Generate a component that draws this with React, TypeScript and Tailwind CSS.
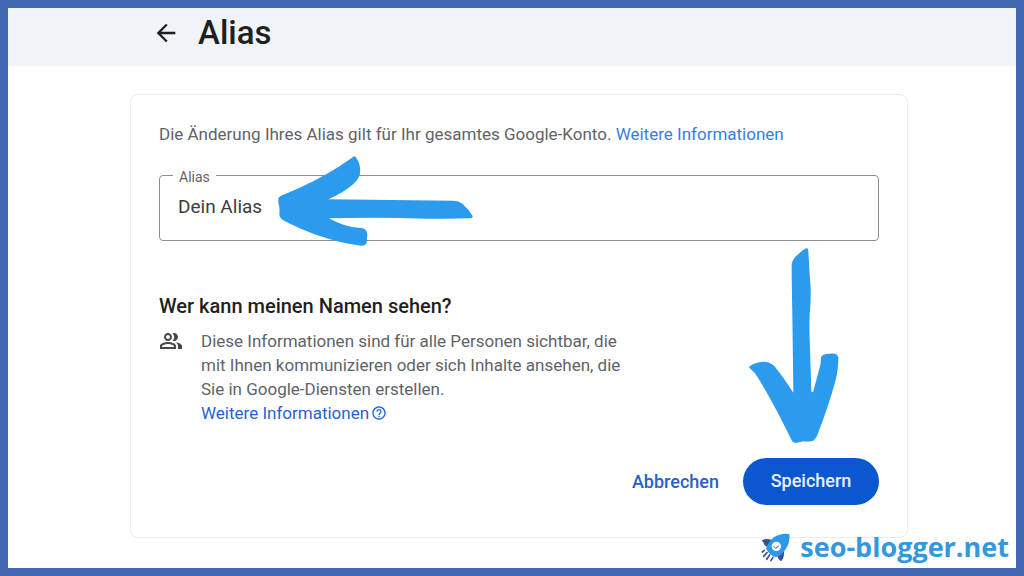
import { useState } from 'react'
import { MdArrowBack, MdHelpOutline, MdOutlinePeopleAlt } from 'react-icons/md'

function ArrowLeftMarker() {
  return (
    <svg
      aria-hidden="true"
      className="pointer-events-none absolute -top-[19px] left-[119px] h-[90px] w-[195px] text-[#2b9bed]"
      fill="currentColor"
      viewBox="0 0 585 270"
    >
      <path d="M1 126Q4 122 20 115Q110 78 186 30L226 2Q231 -2 235 6Q249 26 246 52Q244 68 226 84Q200 108 151 130L525 134Q543 134 554 144Q572 160 584 180Q585 187 578 187Q520 189 446 188Q300 183 153 187Q200 214 246 216Q266 214 268 236L266 262Q262 270 250 269Q196 264 116 237Q60 217 16 193Q4 186 4 174Q6 156 1 140Z" />
    </svg>
  )
}

function ArrowDownMarker() {
  return (
    <svg
      aria-hidden="true"
      className="pointer-events-none absolute bottom-[61px] left-[6px] h-[196px] w-[90px] text-[#2b9bed]"
      fill="currentColor"
      viewBox="0 0 270 588"
    >
      <path d="M171 1Q178 -1 178 8Q181 70 185 120Q186 160 182 200Q180 240 183 300L187 430Q189 436 193 430L215 347L216 330Q218 320 232 318Q248 315 258 317Q269 320 268 334Q267 370 260 396Q240 470 207 556Q202 572 192 578Q178 582 162 580Q150 584 140 585Q130 583 126 572L92 505Q50 424 18 376L1 359Q-1 356 4 353Q20 342 43 341Q62 341 76 354Q104 388 132 433Q134 434 133 428L130 200Q128 100 128 48Q130 38 138 28Q154 10 171 1Z" />
    </svg>
  )
}

function RocketLogo() {
  return (
    <svg aria-hidden="true" className="h-[30px] w-[30px]" viewBox="0 0 90 90">
      <path
        d="M36 24Q16 17 5 26Q12 31 14 40Q20 46 28 46ZM72 56L54 70Q50 80 63 88Q74 76 72 56Z"
        fill="#3c4f91"
      />
      <path
        d="M88 6Q60 3 42 16Q24 30 18 50Q28 68 48 76Q66 70 77 52Q91 31 88 6Z"
        fill="#2b98e8"
      />
      <circle cx="49" cy="43" fill="#fff" r="14" />
      <path d="M41 43L47 49L57 41" fill="none" stroke="#3c4f91" strokeWidth="3" />
      <path
        d="M13 55L7 60M21 62L11 73M29 69L20 82M39 76L33 86"
        fill="none"
        stroke="#3c4f91"
        strokeLinecap="round"
        strokeWidth="5"
      />
    </svg>
  )
}

export default function App() {
  const [alias, setAlias] = useState('Dein Alias')

  return (
    <div className="relative min-h-screen border-8 border-[#4267b2] bg-white font-['Roboto',sans-serif] text-[17px] leading-6 text-[#5f6368]">
      <header className="flex h-[58px] items-center gap-[18px] bg-[#f0f3f8] pb-2 pl-36 text-[#1f1f1f]">
        <button aria-label="Zurück" type="button">
          <MdArrowBack className="size-7" />
        </button>
        <h1 className="text-[33px] leading-10 font-medium">Alias</h1>
      </header>

      <main className="mt-7 mr-[108px] mb-[30px] ml-[122px] rounded-lg border border-[#ebebeb] px-7 pt-[27px] pb-8">
        <p>
          Die Änderung Ihres Alias gilt für Ihr gesamtes Google-Konto.{' '}
          <a className="text-[#3b7de0]" href="#konto">
            Weitere Informationen
          </a>
        </p>

        <div className="relative mt-[29px]">
          <label
            className="absolute -top-1.5 left-3.5 bg-white px-1.5 text-sm leading-4"
            htmlFor="alias"
          >
            Alias
          </label>
          <input
            className="block h-[66px] w-full rounded border border-[#8e8e8e] px-[18px] pb-1 text-[19px] text-[#3c3c3c] outline-none"
            id="alias"
            onChange={(e) => setAlias(e.target.value)}
            type="text"
            value={alias}
          />
          <ArrowLeftMarker />
        </div>

        <section className="mt-[53px]">
          <h2 className="text-[20px] font-medium text-[#1f1f1f]">
            Wer kann meinen Namen sehen?
          </h2>
          <div className="mt-[11px] flex gap-[18px]">
            <MdOutlinePeopleAlt className="size-6 shrink-0 text-[#444746]" />
            <div>
              <p className="max-w-[430px]">
                Diese Informationen sind für alle Personen sichtbar, die mit
                Ihnen kommunizieren oder sich Inhalte ansehen, die Sie in
                Google-Diensten erstellen.
              </p>
              <a
                className="flex items-center gap-0.5 text-[#1f64d0]"
                href="#sichtbarkeit"
              >
                Weitere Informationen
                <MdHelpOutline className="size-4" />
              </a>
            </div>
          </div>
        </section>

        <div className="mt-[33px] flex justify-end gap-6 text-lg font-medium">
          <button className="text-[#2a5fc9]" type="button">
            Abbrechen
          </button>
          <div className="relative">
            <ArrowDownMarker />
            <button
              className="h-[47px] w-[136px] rounded-full bg-[#0b57d0] pb-0.5 text-[#e8f0fe]"
              type="button"
            >
              Speichern
            </button>
          </div>
        </div>
      </main>

      <a
        className="absolute right-[7px] bottom-[5px] flex items-center gap-2.5 font-['Open_Sans',sans-serif] text-[27px] leading-8 font-bold text-[#3398dc]"
        href="#start"
      >
        <RocketLogo />
        seo-blogger.net
      </a>
    </div>
  )
}
